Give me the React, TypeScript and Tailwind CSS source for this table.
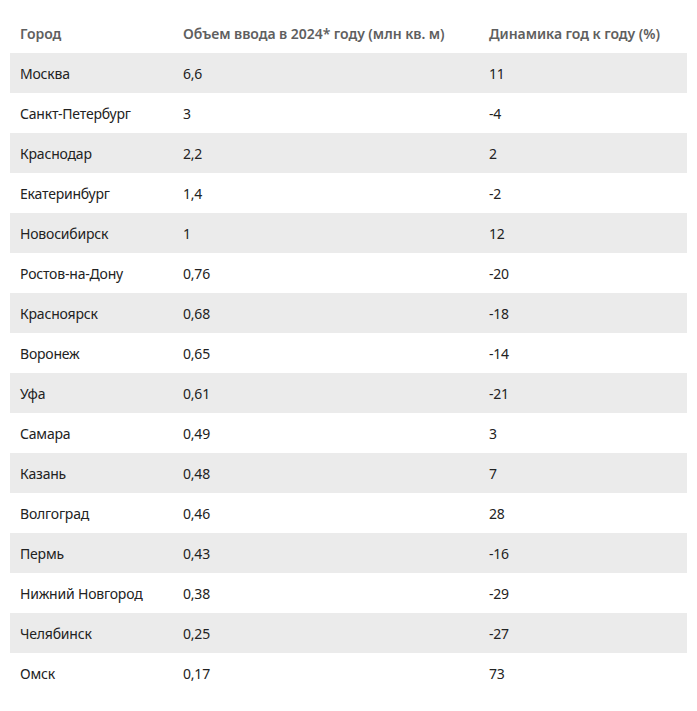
import React from 'react'

const rows: [string, string, string][] = [
    ['Москва', '6,6', '11'],
    ['Санкт-Петербург', '3', '-4'],
    ['Краснодар', '2,2', '2'],
    ['Екатеринбург', '1,4', '-2'],
    ['Новосибирск', '1', '12'],
    ['Ростов-на-Дону', '0,76', '-20'],
    ['Красноярск', '0,68', '-18'],
    ['Воронеж', '0,65', '-14'],
    ['Уфа', '0,61', '-21'],
    ['Самара', '0,49', '3'],
    ['Казань', '0,48', '7'],
    ['Волгоград', '0,46', '28'],
    ['Пермь', '0,43', '-16'],
    ['Нижний Новгород', '0,38', '-29'],
    ['Челябинск', '0,25', '-27'],
    ['Омск', '0,17', '73'],
]

export default function App() {
    return (
        <div className="min-h-screen bg-white px-[10px] pt-[13px] font-['Noto_Sans',sans-serif] text-[14px]">
            <table className="w-[677px] border-collapse table-fixed">
                <colgroup>
                    <col className="w-[173px]" />
                    <col className="w-[306px]" />
                    <col className="w-[198px]" />
                </colgroup>
                <thead>
                    <tr className="h-[40px] text-left text-[#5f5f5f] font-semibold tracking-[-0.05px]">
                        <th className="px-[10px] font-semibold">Город</th>
                        <th className="px-0 font-semibold">Объем ввода в 2024* году (млн кв. м)</th>
                        <th className="px-0 font-semibold">Динамика год к году (%)</th>
                    </tr>
                </thead>
                <tbody className="text-[#222222] tracking-[-0.2px]">
                    {rows.map((r, i) => (
                        <tr key={r[0]} className={i % 2 === 0 ? 'h-[40px] bg-[#ebebeb]' : 'h-[40px]'}>
                            <td className="px-[10px]">{r[0]}</td>
                            <td>{r[1]}</td>
                            <td>{r[2]}</td>
                        </tr>
                    ))}
                </tbody>
            </table>
        </div>
    )
}
